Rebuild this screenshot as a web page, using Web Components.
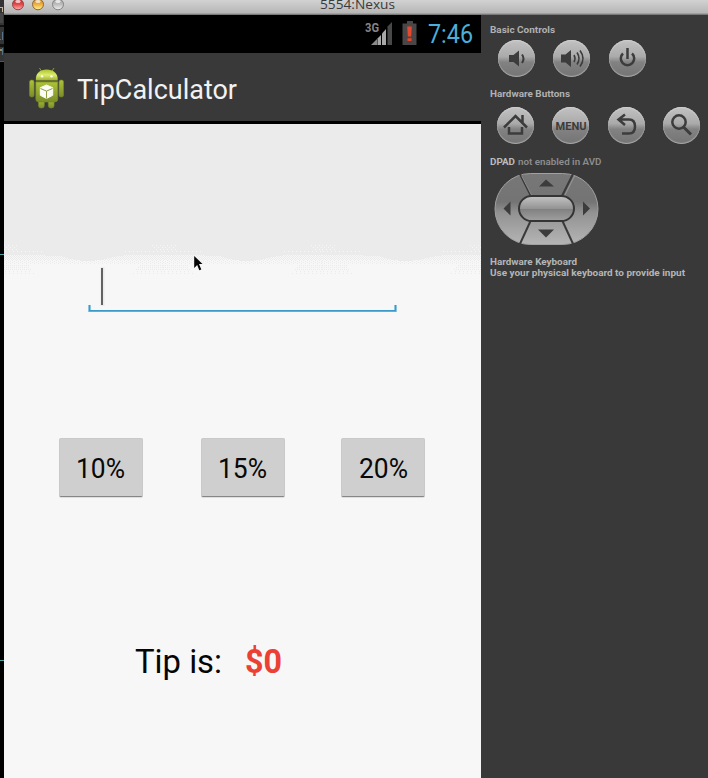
<!DOCTYPE html>
<html lang="en"><head><meta charset="utf-8"><title>5554:Nexus</title>
<style>html,body{margin:0;width:708px;height:778px;overflow:hidden;background:#000;font-family:Roboto,sans-serif}</style></head>
<body><emulator-window></emulator-window>
<script>
const define=(name,html)=>customElements.define(name,class extends HTMLElement{
  constructor(){super();this.attachShadow({mode:'open'}).innerHTML=typeof html==='function'?html(this):html;}
});

/* One line of text fitted to a given width; w, h, base, size in px. */
customElements.define('fit-text',class extends HTMLElement{
  connectedCallback(){
    if(this.shadowRoot)return;
    const a=n=>this.getAttribute(n),w=a('w'),h=a('h');
    this.attachShadow({mode:'open'}).innerHTML=`<style>:host{display:block;flex:none;width:${w}px;height:${h}px}svg{display:block;overflow:visible}
    text{font:${a('weight')||400} ${a('size')}px ${a('family')||'Roboto'},sans-serif;fill:${a('color')}}</style>
    <svg width="${w}" height="${h}"><text x="0" y="${a('base')}" textLength="${w}" lengthAdjust="spacingAndGlyphs"></text></svg>`;
    this.shadowRoot.querySelector('text').textContent=this.getAttribute('text');
  }
});

define('title-bar',`<style>
:host{display:flex;height:15px;width:704px;box-sizing:border-box;background:linear-gradient(#d2d2d2,#b6b6b6 13px,#8a8a8a 14px,#6b6b6b 15px)}
.l{width:316px;flex:none}svg{display:block}</style>
<div class="l"><svg width="70" height="15"><defs>
<linearGradient id="r" x2="0" y2="1"><stop stop-color="#b92d30"/><stop offset=".5" stop-color="#e2484a"/><stop offset="1" stop-color="#ffb4ae"/></linearGradient>
<linearGradient id="y" x2="0" y2="1"><stop stop-color="#c17a20"/><stop offset=".5" stop-color="#eeb03e"/><stop offset="1" stop-color="#fff29a"/></linearGradient>
<linearGradient id="g" x2="0" y2="1"><stop stop-color="#999"/><stop offset=".5" stop-color="#bdbdbd"/><stop offset="1" stop-color="#eee"/></linearGradient></defs>
<circle cx="14" cy="4.3" r="5.5" fill="url(#r)" stroke="#91474a"/><circle cx="34" cy="4.3" r="5.5" fill="url(#y)" stroke="#8f6a35"/><circle cx="54" cy="4.3" r="5.5" fill="url(#g)" stroke="#858585"/>
<ellipse cx="14" cy="1.5" rx="2.6" ry="1.6" fill="#fff" opacity=".7"/><ellipse cx="34" cy="1.5" rx="2.6" ry="1.6" fill="#fff" opacity=".7"/><ellipse cx="54" cy="1.5" rx="2.6" ry="1.6" fill="#fff" opacity=".7"/></svg></div>
<fit-text text="5554:Nexus" w="75" h="15" base="9" size="12" family="'Open Sans'" color="#3b3b3b"></fit-text>`);

define('status-bar',`<style>:host{display:flex;height:38px;background:#000}
.s{margin-left:361px;width:27px}.b{margin-left:10px;width:16px}.t{margin-left:9.500px}svg{display:block}</style>
<svg class="s" width="27" height="38"><text x="0" y="17" textLength="14" lengthAdjust="spacingAndGlyphs" font-family="Roboto" font-weight="700" font-size="12" fill="#868686">3G</text>
<path d="M6 30L12 24V30Z" fill="#8a8a8a"/><path d="M12.500 30V23.500L16 20V30Z" fill="#a8a8a8"/><path d="M17 30V18.500L21 14V30Z" fill="#a8a8a8"/><path d="M22.500 30V11.500L27 7V30Z" fill="#484848"/></svg>
<svg class="b" width="16" height="38"><path d="M5 6h6v2.500h3.500V30H.5V8.500H5Z" fill="#4a4546"/><path d="M5.200 11.500h4.600l-.6 10H5.800ZM5.500 23.300h4v2.800H5.500Z" fill="#e4482e"/></svg>
<fit-text class="t" text="7:46" w="45" h="38" base="28" size="25" color="#4baedb"></fit-text>`);

define('android-icon',`<style>:host{display:block;width:36px;height:42px}svg{display:block}</style>
<svg width="36" height="42"><defs><linearGradient id="h" x2="0" y2="1"><stop stop-color="#adc22f"/><stop offset=".5" stop-color="#dcec70"/><stop offset="1" stop-color="#9bb02c"/></linearGradient>
<linearGradient id="b" x2="0" y2="1"><stop stop-color="#acc337"/><stop offset="1" stop-color="#7b8d29"/></linearGradient></defs>
<path d="M11.500 1L14 5M26 1L23.500 5" stroke="#8a9e2b"/>
<g fill="url(#b)" stroke="#758729" stroke-width=".6"><rect x="1.500" y="13" width="4.600" height="17" rx="2"/><rect x="31" y="13" width="4.600" height="17" rx="2"/><rect x="10.500" y="32" width="5.800" height="9" rx="2.600"/><rect x="20.300" y="32" width="5.800" height="9" rx="2.600"/><path d="M7.800 15h22v17q0 3-3 3H10.800q-3 0-3-3Z"/></g>
<path d="M7.800 13.500C7.500 6 12 2.500 18.600 2.500S30 6 29.800 13.500Z" fill="url(#h)"/><path d="M7.800 14.500h22" stroke="#65761d"/>
<circle cx="14" cy="9.300" r="1.200" fill="#fbffe5"/><circle cx="23.500" cy="9.300" r="1.200" fill="#fbffe5"/>
<path d="M18.500 18l6.200 2.700v7.600L18.500 31.500l-6.200-3.200v-7.600Z" fill="#fafcf3" stroke="#fafcf3" stroke-linejoin="round"/><path d="M12.500 21.500l6 2.600 6-2.600M18.500 24.100V31.500" fill="none" stroke="#8b9d45"/></svg>`);

define('action-bar',`<style>:host{display:flex;height:71px;box-sizing:border-box;background:#393939;border-bottom:3px solid #000}
android-icon{margin:14px 13px 0 24px}</style><android-icon></android-icon>
<fit-text text="TipCalculator" w="160" h="68" base="45.500" size="27.500" color="#f2f2f2"></fit-text>`);

/* Grey sheet whose lower edge dissolves into dots in a repeating wave. */
define('dither-header',`<style>:host{display:block;height:151px}svg{display:block}</style>
<svg width="477" height="151" shape-rendering="crispEdges"><defs>
<pattern id="c" width="2" height="2" patternUnits="userSpaceOnUse"><path d="M0 0h1v1H0zM1 1h1v1H1z" fill="#ebebeb"/></pattern>
<pattern id="d" width="4" height="2" patternUnits="userSpaceOnUse"><path d="M0 0h1v1H0zM2 1h1v1H2z" fill="#ebebeb"/></pattern>
<pattern id="s" width="2" height="2" patternUnits="userSpaceOnUse"><path d="M0 1h1v1H0z" fill="#ebebeb"/></pattern>
<pattern id="q" width="4" height="2" patternUnits="userSpaceOnUse"><path d="M1 1h1v1H1z" fill="#ebebeb"/></pattern>
<pattern id="w" width="4" height="2" patternUnits="userSpaceOnUse"><path d="M1 1h1v1H1z" fill="#f7f7f7"/></pattern>
<pattern id="v" width="4" height="4" patternUnits="userSpaceOnUse"><path d="M0 1h1v1H0zM2 3h1v1H2z" fill="#f7f7f7"/></pattern>
<g id="u"><path d="M0 0H159V131H132Q115 131 105 134Q95 137 80 137Q68 136 56 132Q35 131 0 131Z" fill="#ebebeb"/>
<path d="M0 131H159V136H0Z" fill="url(#c)"/><path d="M0 136H159V140H0Z" fill="url(#d)"/>
<path d="M0 140H24L28 147H0ZM137 140H159V147H130Z" fill="url(#s)"/><path d="M0 147H28L34 150H0ZM130 147H159V150H127Z" fill="url(#q)"/>
<path d="M0 127H38V129H0ZM121 127H159V129H121Z" fill="url(#w)"/><path d="M0 121H14V127H0ZM147 121H159V127H152Z" fill="url(#v)"/></g></defs>
<rect width="477" height="151" fill="#f7f7f7"/><use href="#u"/><use href="#u" x="159"/><use href="#u" x="318"/></svg>`);

define('tip-field',`<style>:host{display:block;width:309px;height:47px;margin-left:84px}svg{display:block}</style>
<svg width="309" height="47"><path d="M12.500 2h4v39h-4z" fill="#ebebeb"/><path d="M13 3h2v37h-2z" fill="#626262"/>
<path d="M0 40h3v5H306v-5h3v7H0Z" fill="#8cc5e2"/><path d="M1 40h1v5H307v-5h1v6.500H1Z" fill="#399ac9"/></svg>`);

define('tip-button',`<style>:host{display:flex;justify-content:center;width:84px;height:59px;box-sizing:border-box;background:#cfcfcf;border:1px solid #c9c9c9;border-bottom:1px solid #868686;border-radius:2px;box-shadow:0 1px #dedede}</style><slot></slot>`);

define('tip-screen',`<style>:host{display:block;width:477px;height:654px;background:#f7f7f7;overflow:hidden}
dither-header{height:141px}tip-field{position:relative}.row{display:flex;margin:126px 0 0 54.600px;gap:58px}.row :last-child{margin-left:-1.500px}.row fit-text:last-child{margin-left:0}.out{display:flex;margin:143px 0 0 130.500px;gap:23px}</style>
<dither-header></dither-header><tip-field></tip-field>
<div class="row"><tip-button><fit-text text="10%" w="49" h="57" base="38.500" size="27" color="#080808"></fit-text></tip-button><tip-button><fit-text text="15%" w="49" h="57" base="38.500" size="27" color="#080808"></fit-text></tip-button><tip-button><fit-text text="20%" w="49" h="57" base="38.500" size="27" color="#080808"></fit-text></tip-button></div>
<div class="out"><fit-text text="Tip is:" w="87" h="40" base="33" size="33.500" color="#050505"></fit-text><fit-text text="$0" w="37" h="40" base="33" size="33" weight="700" color="#eb4034"></fit-text></div>`);

define('round-key',`<style>:host{display:block;width:37px;height:37px;flex:none;box-sizing:border-box;border-radius:50%;background:linear-gradient(#c2c2c2,#aaa 45%,#828282 60%,#747474);box-shadow:inset 0 1px 1px #cfcfcf,inset 0 -1px 1px #aaa}</style><slot></slot>`);

define('d-pad',`<style>:host{display:block;width:105px;height:74px}svg{display:block}</style>
<svg width="105" height="74"><defs><linearGradient id="a" x2="0" y2="1"><stop stop-color="#777"/><stop offset=".4" stop-color="#747474"/><stop offset=".55" stop-color="#929292"/><stop offset="1" stop-color="#b5b5b5"/></linearGradient>
<linearGradient id="m" x2="0" y2="1"><stop stop-color="#c4c4c4"/><stop offset=".5" stop-color="#949494"/><stop offset=".52" stop-color="#808080"/><stop offset="1" stop-color="#a0a0a0"/></linearGradient></defs>
<rect x="1" y="1.500" width="103" height="71" rx="35.500" fill="url(#a)" stroke="#a1a1a1"/>
<path d="M25 0L37 24M80 0L68 24M25 74L37 48M80 74L68 48" stroke="#3a3a3a" stroke-width="2"/>
<path d="M27.500 3.500L38 24M80.500 4L70 25M38.500 49H66.500" stroke="#a0a0a0" stroke-width=".8"/>
<rect x="25" y="24" width="55" height="25" rx="12.500" fill="url(#m)" stroke="#353535" stroke-width="2"/>
<path d="M52 7.500l8 7H45ZM52 65.500l8-8H44ZM9.500 36.500l7-7v14ZM96 36.500l-7-7v14Z" fill="#3c3c3c"/></svg>`);

define('control-panel',`<style>:host{display:block;width:227px;height:763px;background:#393939;box-sizing:border-box;padding:7px 0 0 9px}
.k{display:flex;gap:18.600px;margin:2px 0 0 7.500px}.k+fit-text{margin-top:7px}.k2{margin:7px 0 0 6.500px}svg{display:block}
.d{display:flex;gap:3px;margin-top:9px}d-pad{margin:7px 0 0 4px}.kb{margin-top:8px}
.i{fill:none;stroke:#3c3c3c;stroke-width:2.500}</style>
<fit-text text="Basic Controls" w="65" h="16" base="10.500" size="9.700" weight="700" color="#b1b1b1"></fit-text>
<div class="k">
<round-key><svg width="37" height="37"><path d="M11 15h4.500l5.500-4.500v16l-5.500-4.500H11Z" fill="#3c3c3c"/><path class="i" style="stroke-width:2" d="M24 14.500q3 4 0 8.500"/></svg></round-key>
<round-key><svg width="37" height="37"><path d="M8 14.500h4.500l5.500-4.500v17l-5.500-4.500H8Z" fill="#3c3c3c"/><path class="i" style="stroke-width:1.600" d="M21 15q2 3.500 0 7M24 12.500q4 6 0 12M27 10.500q6 8 0 16"/></svg></round-key>
<round-key><svg width="37" height="37"><path class="i" d="M14 13.500a6.700 6.700 0 1 0 9 0M18.500 8v11"/></svg></round-key></div>
<fit-text text="Hardware Buttons" w="80" h="16" base="12.500" size="9.700" weight="700" color="#b1b1b1"></fit-text>
<div class="k k2">
<round-key><svg width="37" height="37"><path class="i" d="M7 20.500L18.500 9L30 20.500M25.500 8v8M12 20v6.500H25V20"/></svg></round-key>
<round-key><svg width="37" height="37"><text x="3.500" y="23.200" textLength="31" lengthAdjust="spacingAndGlyphs" font-family="Roboto" font-weight="700" font-size="10.800" fill="#3c3c3c">MENU</text></svg></round-key>
<round-key><svg width="37" height="37"><path class="i" d="M17 7.500L10.500 12.500L17 18M11 12.500H21q6 0 6 7t-6 7H14"/></svg></round-key>
<round-key><svg width="37" height="37"><circle class="i" cx="16" cy="15" r="6.700"/><path class="i" style="stroke-width:3" d="M20.500 20L28 27.500"/></svg></round-key></div>
<div class="d"><fit-text text="DPAD" w="25" h="12" base="12" size="9.700" weight="700" color="#bcbcbc"></fit-text><fit-text text="not enabled in AVD" w="83.500" h="12" base="12" size="9.700" weight="600" color="#8d8d8d"></fit-text></div>
<d-pad></d-pad>
<fit-text class="kb" text="Hardware Keyboard" w="87" h="11" base="11" size="9.700" weight="700" color="#b5b5b5"></fit-text>
<fit-text text="Use your physical keyboard to provide input" w="195" h="11" base="11" size="9.700" weight="700" color="#b5b5b5"></fit-text>`);

define('edge-strip',`<style>:host{display:block;width:4px;height:778px}svg{display:block}</style>
<svg width="4" height="778" shape-rendering="crispEdges"><path d="M0 0h4v62H0z" fill="#343434"/><path d="M0 7h3v1H0zM2 8h1v4H2z" fill="#c9b398"/><path d="M0 13h3v10H0z" fill="#454545"/><path d="M0 25h4v2H0zM0 44h4v3H0z" fill="#111"/><path d="M0 39h1v1H0zM2 32h1v8H2z" fill="#5b7186"/><path d="M0 49h2v2H0z" fill="#9a855b"/><path d="M2 48h1v7H2z" fill="#56727e"/><path d="M0 61h4v1H0z" fill="#555"/><path d="M0 62h4v716H0z" fill="#000"/><path d="M0 254h4v1H0zM0 660h4v1H0z" fill="#48a5a5"/></svg>`);

define('mouse-pointer',`<style>:host{display:block;width:10px;height:16px}svg{display:block}</style><svg width="10" height="16"><path d="M.2 0L8.500 8H5l2.300 5.400-2 .8L3.200 9 .2 12Z" fill="#050505"/></svg>`);

define('emulator-window',`<style>:host{display:flex;position:relative;width:708px;height:778px}.b{display:flex}mouse-pointer{position:absolute;left:194px;top:256px}</style>
<edge-strip></edge-strip><div><title-bar></title-bar><div class="b"><div><status-bar></status-bar><action-bar></action-bar><tip-screen></tip-screen></div><control-panel></control-panel></div></div><mouse-pointer></mouse-pointer>`);
</script></body></html>
